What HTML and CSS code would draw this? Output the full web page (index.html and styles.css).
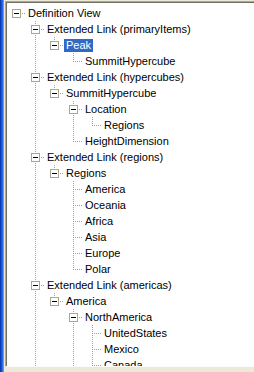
FILE: index.html
```html
<!DOCTYPE html>
<html lang="en">
  <head>
    <meta charset="utf-8" />
    <title>Definition View</title>
    <link rel="stylesheet" href="styles.css">
  </head>
  <body>
    <div class="frame">
      <div class="stripe"></div>
      <div class="window">
        <div class="bezel">
          <div class="tree">
            <!-- c = indent cell, p = pipe, t = tee, e = elbow, h = horizontal only -->
            <div class="row"><span class="c h"><i class="box"></i></span><span class="label">Definition View</span></div>
            <div class="row"><span class="c"></span><span class="c t"><i class="box"></i></span><span class="label">Extended Link (primaryItems)</span></div>
            <div class="row"><span class="c"></span><span class="c p"></span><span class="c e"><i class="box"></i></span><span class="label sel">Peak</span></div>
            <div class="row"><span class="c"></span><span class="c p"></span><span class="c"></span><span class="c e"></span><span class="label">SummitHypercube</span></div>
            <div class="row"><span class="c"></span><span class="c t"><i class="box"></i></span><span class="label">Extended Link (hypercubes)</span></div>
            <div class="row"><span class="c"></span><span class="c p"></span><span class="c e"><i class="box"></i></span><span class="label">SummitHypercube</span></div>
            <div class="row"><span class="c"></span><span class="c p"></span><span class="c"></span><span class="c t"><i class="box"></i></span><span class="label">Location</span></div>
            <div class="row"><span class="c"></span><span class="c p"></span><span class="c"></span><span class="c p"></span><span class="c e"></span><span class="label">Regions</span></div>
            <div class="row"><span class="c"></span><span class="c p"></span><span class="c"></span><span class="c e"></span><span class="label">HeightDimension</span></div>
            <div class="row"><span class="c"></span><span class="c t"><i class="box"></i></span><span class="label">Extended Link (regions)</span></div>
            <div class="row"><span class="c"></span><span class="c p"></span><span class="c e"><i class="box"></i></span><span class="label">Regions</span></div>
            <div class="row"><span class="c"></span><span class="c p"></span><span class="c"></span><span class="c t"></span><span class="label">America</span></div>
            <div class="row"><span class="c"></span><span class="c p"></span><span class="c"></span><span class="c t"></span><span class="label">Oceania</span></div>
            <div class="row"><span class="c"></span><span class="c p"></span><span class="c"></span><span class="c t"></span><span class="label">Africa</span></div>
            <div class="row"><span class="c"></span><span class="c p"></span><span class="c"></span><span class="c t"></span><span class="label">Asia</span></div>
            <div class="row"><span class="c"></span><span class="c p"></span><span class="c"></span><span class="c t"></span><span class="label">Europe</span></div>
            <div class="row"><span class="c"></span><span class="c p"></span><span class="c"></span><span class="c e"></span><span class="label">Polar</span></div>
            <div class="row"><span class="c"></span><span class="c t"><i class="box"></i></span><span class="label">Extended Link (americas)</span></div>
            <div class="row"><span class="c"></span><span class="c p"></span><span class="c e"><i class="box"></i></span><span class="label">America</span></div>
            <div class="row"><span class="c"></span><span class="c p"></span><span class="c"></span><span class="c t"><i class="box"></i></span><span class="label">NorthAmerica</span></div>
            <div class="row"><span class="c"></span><span class="c p"></span><span class="c"></span><span class="c p"></span><span class="c t"></span><span class="label">UnitedStates</span></div>
            <div class="row"><span class="c"></span><span class="c p"></span><span class="c"></span><span class="c p"></span><span class="c t"></span><span class="label">Mexico</span></div>
            <div class="row"><span class="c"></span><span class="c p"></span><span class="c"></span><span class="c p"></span><span class="c t"></span><span class="label">Canada</span></div>
          </div>
        </div>
      </div>
    </div>
  </body>
</html>
```

FILE: styles.css
```css
html, body {
  margin: 0;
  padding: 0;
  overflow: hidden;
}

.frame {
  display: flex;
  width: 254px;
  height: 372px;
  font-family: "Liberation Sans", Arial, sans-serif;
  font-size: 11px;
  color: #000;
}

.stripe {
  width: 4px;
  flex: none;
  background: linear-gradient(to right, #0a3bb0 0 1px, #1550d6 1px 2px, #2b68ee 2px 3px, #6a96f2 3px 4px);
}

.window {
  flex: 1;
  display: flex;
  flex-direction: column;
  background: #ece9d8;
  padding: 1px 0 5px 1px;
}

.bezel {
  flex: 1;
  display: flex;
  border-top: 1px solid #aca899;
  border-left: 1px solid #aca899;
  border-bottom: 1px solid #fcfcf9;
  min-height: 0;
}

.tree {
  flex: 1;
  background: #fff;
  border-top: 1px solid #716f64;
  border-left: 1px solid #716f64;
  padding-top: 2px;
  overflow: hidden;
}

.row {
  display: flex;
  align-items: center;
  height: 16px;
  white-space: nowrap;
}

.c {
  flex: none;
  align-self: stretch;
  width: 19px;
  background-repeat: no-repeat;
}

/* dotted tree lines */
.p {
  background-image: repeating-linear-gradient(to bottom, #a0a0a0 0 1px, transparent 1px 2px);
  background-size: 1px 100%;
  background-position: 9px 0;
}

.t {
  background-image:
    repeating-linear-gradient(to bottom, #a0a0a0 0 1px, transparent 1px 2px),
    repeating-linear-gradient(to right, #a0a0a0 0 1px, transparent 1px 2px);
  background-size: 1px 100%, 10px 1px;
  background-position: 9px 0, 9px 8px;
}

.e {
  background-image:
    repeating-linear-gradient(to bottom, #a0a0a0 0 1px, transparent 1px 2px),
    repeating-linear-gradient(to right, #a0a0a0 0 1px, transparent 1px 2px);
  background-size: 1px 9px, 10px 1px;
  background-position: 9px 0, 9px 8px;
}

.h {
  background-image: repeating-linear-gradient(to right, #a0a0a0 0 1px, transparent 1px 2px);
  background-size: 10px 1px;
  background-position: 9px 8px;
}

.box {
  display: block;
  width: 7px;
  height: 7px;
  margin: 4px 0 0 5px;
  border: 1px solid #a8a592;
  background: #fff;
}

.box::after {
  content: "";
  display: block;
  width: 5px;
  height: 1px;
  margin: 3px 0 0 1px;
  background: #000;
}

.label {
  height: 13px;
  line-height: 13px;
  padding: 0 2px;
}

.sel {
  background: #316ac5;
  color: #fff;
}
```
